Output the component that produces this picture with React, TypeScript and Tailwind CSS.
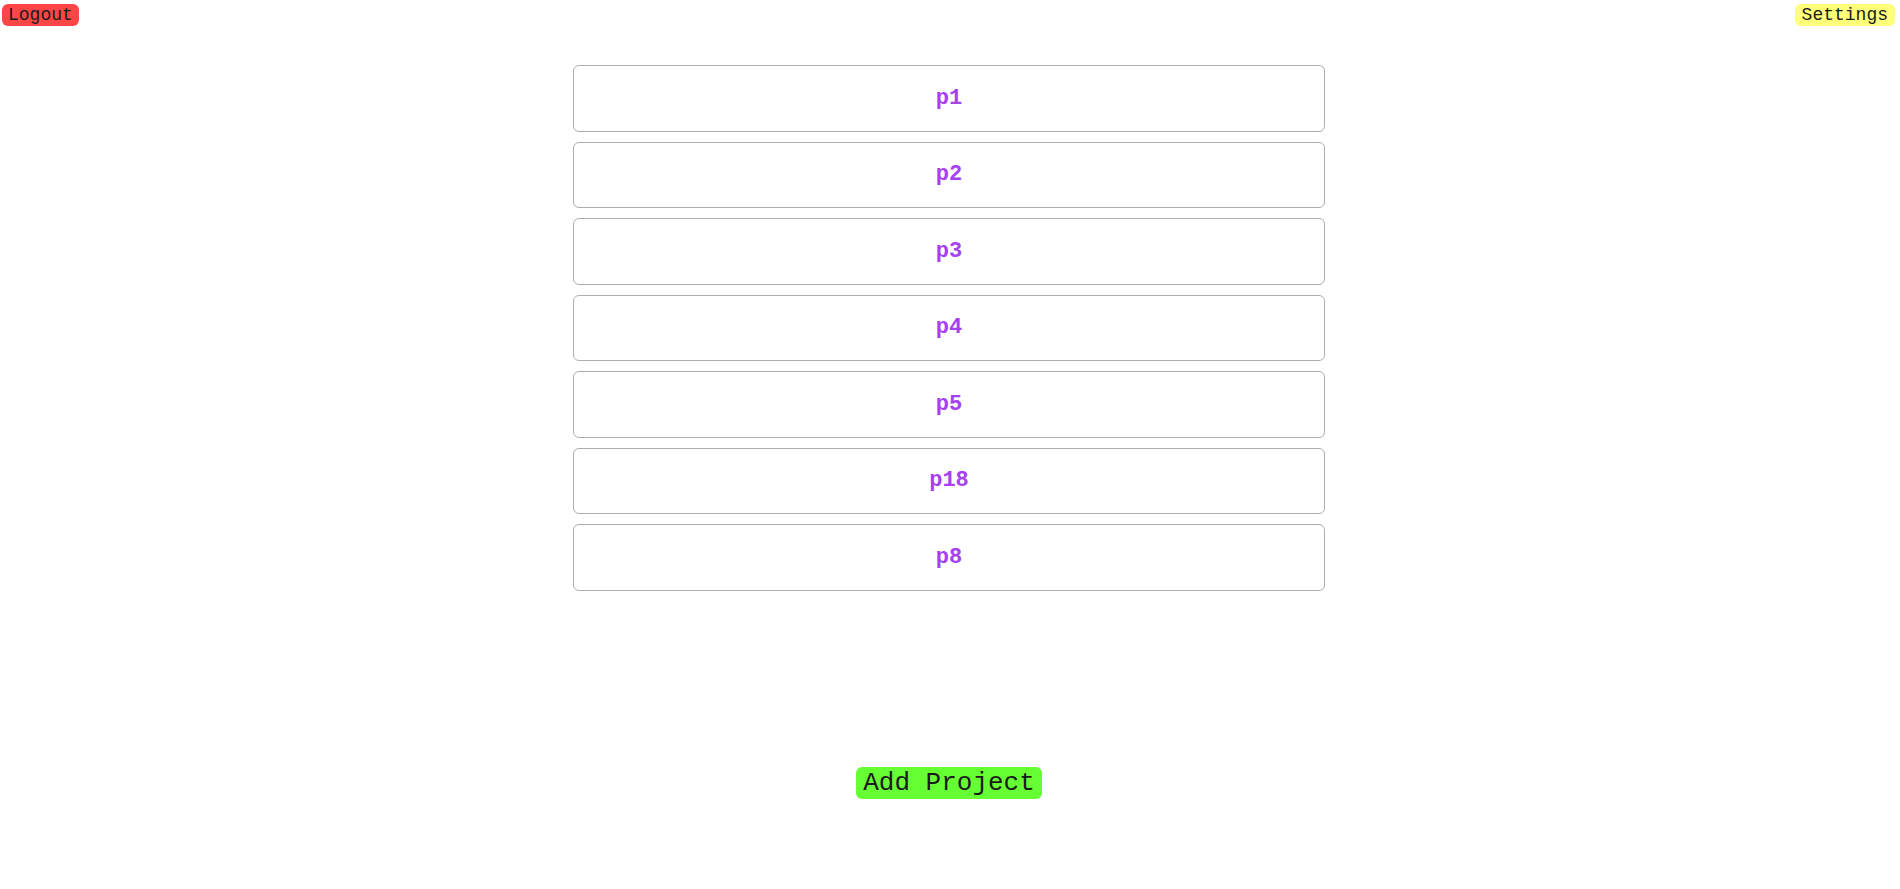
import type { JSX } from "react";

const projects = ["p1", "p2", "p3", "p4", "p5", "p18", "p8"];

const mono = "font-['Courier_New','Liberation_Mono',monospace]";

export default function App(): JSX.Element {
    return (
        <div className={`min-h-screen bg-white text-black ${mono}`}>
            <div className="flex items-start justify-between pl-[2px] pr-[5px] pt-[4px]">
                <button className="rounded-[6px] bg-[#ff4646] px-[6px] py-px text-[18px] leading-[20px] text-[#1a1a1a]">
                    Logout
                </button>
                <button className="rounded-[6px] bg-[#ffff7a] px-[7px] py-px text-[18px] leading-[20px] text-[#1a1a1a]">
                    Settings
                </button>
            </div>

            <div className="mt-[39px] flex justify-center pr-[2px]">
                <ul className="flex w-[752px] flex-col gap-[10px]">
                    {projects.map((name) => (
                        <li
                            key={name}
                            className="flex h-[66.5px] items-center justify-center rounded-[6px] border border-[#adadad] bg-white"
                        >
                            <span className="text-[22px] font-bold text-[#a640f2]">{name}</span>
                        </li>
                    ))}
                </ul>
            </div>

            <div className="mt-[176px] flex justify-center pr-[2px]">
                <button className="rounded-[6px] bg-[#66ff33] px-[7px] py-px text-[26px] leading-[30px] text-[#1a1a1a]">
                    Add Project
                </button>
            </div>
        </div>
    );
}
